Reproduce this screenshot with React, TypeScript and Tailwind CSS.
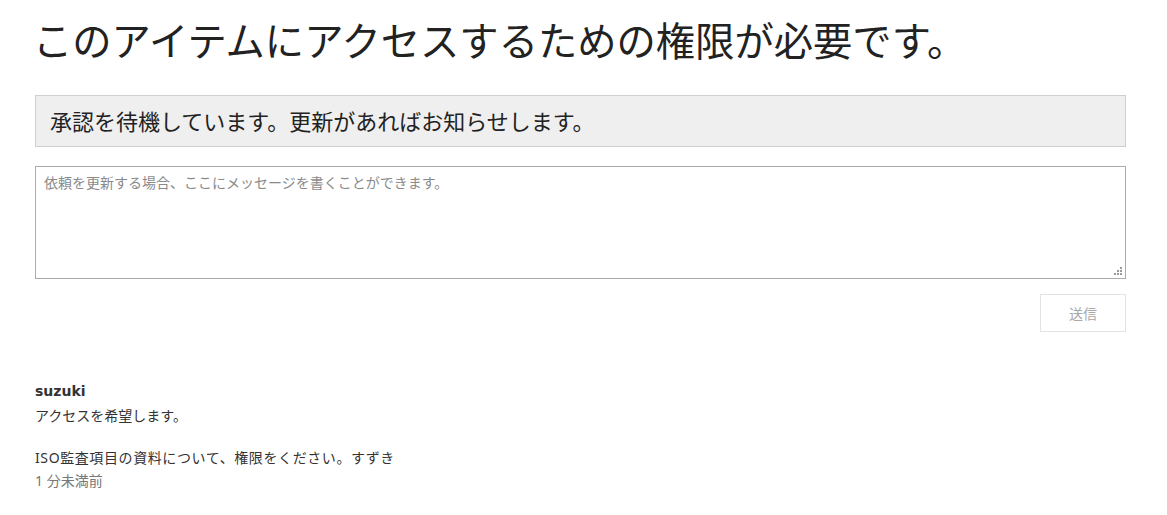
import React from "react";

export default function App() {
  return (
    <div
      className="w-[1167px] h-[515px] bg-white text-[#333333] overflow-hidden"
      style={{ fontFamily: '"Noto Sans", "Noto Sans CJK JP", sans-serif' }}
    >
      <div className="px-[35px] w-[1161px]">
        <h1 className="text-[39.3px] leading-[48px] pt-[17px] text-[#222222] -ml-[2px]">
          このアイテムにアクセスするための権限が必要です。
        </h1>
        <div className="mt-[30px] h-[52px] border border-[#cfcfcf] bg-[#efefef] flex items-center px-[14px]">
          <span className="text-[22px] text-[#222222]">承認を待機しています。更新があればお知らせします。</span>
        </div>
        <div className="mt-[19px] relative">
          <textarea
            className="block w-full h-[113px] border border-[#ababab] px-[8px] py-[6px] text-[14px] leading-[20px] resize-none outline-none placeholder:text-[#8a8a8a]"
            placeholder="依頼を更新する場合、ここにメッセージを書くことができます。"
          />
          <svg className="absolute right-[4px] bottom-[4px]" width="8" height="8" viewBox="0 0 8 8">
            <rect x="6" y="0" width="2" height="2" fill="#9a9a9a" />
            <rect x="3" y="3" width="2" height="2" fill="#9a9a9a" />
            <rect x="6" y="3" width="2" height="2" fill="#9a9a9a" />
            <rect x="0" y="6" width="2" height="2" fill="#9a9a9a" />
            <rect x="3" y="6" width="2" height="2" fill="#9a9a9a" />
            <rect x="6" y="6" width="2" height="2" fill="#9a9a9a" />
          </svg>
        </div>
        <div className="flex justify-end mt-[15px]">
          <button className="w-[86px] h-[38px] border border-[#e3e3e3] bg-white text-[14px] text-[#a8a8a8]">
            送信
          </button>
        </div>
        <div className="mt-[49px]">
          <div
            className="text-[14px] font-bold leading-[20px] text-[#333333]"
            style={{ fontFamily: '"DejaVu Sans", sans-serif' }}
          >
            suzuki
          </div>
          <div className="text-[14px] leading-[20px] mt-[5px] text-[#333333]">アクセスを希望します。</div>
          <div className="text-[14px] leading-[20px] mt-[22px] text-[#333333] tracking-[0.6px]">
            ISO監査項目の資料について、権限をください。すずき
          </div>
          <div className="text-[14px] leading-[20px] mt-[3px] text-[#777777]">1 分未満前</div>
        </div>
      </div>
    </div>
  );
}
